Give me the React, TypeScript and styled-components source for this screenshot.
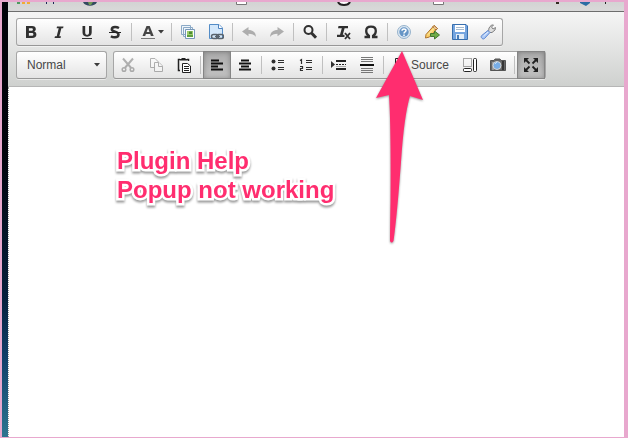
import React from "react";
import styled, { createGlobalStyle, css } from "styled-components";

const GlobalStyle = createGlobalStyle`
  * { box-sizing: border-box; }
  html, body, #root { height: 100%; margin: 0; }
  body { font-family: "Liberation Sans", Arial, sans-serif; font-size: 12px; color: #474747; }
  button, textarea { font: inherit; color: inherit; }
`;

const Frame = styled.main`
  display: flex;
  height: 100%;
  overflow: hidden;
  border-style: solid;
  border-color: #e8a8ce;
  border-width: 2px 4px 1px 2px;
`;

const Desktop = styled.div`
  flex: 0 0 6px;
  background: linear-gradient(#02030a 0%, #02040c 35%, #06203c 68%, #12406a 82%, #2e7590 100%);
`;

const Window = styled.section`
  position: relative;
  flex: 1;
  min-width: 0;
  display: flex;
  flex-direction: column;
  background: #fff;
`;

const BookmarkBar = styled.div`
  height: 10px;
  flex: none;
  overflow: hidden;
  display: grid;
  grid-template-columns: 75px 153px 101px 96px 123px 24px 25px 1fr;
  background: linear-gradient(#d3d3d3, #d9d9d9);
  border-bottom: 1px solid #6d6d6d;
`;

const Bookmark = styled.div`
  display: flex;
  align-items: flex-start;
  svg { display: block; flex: none; }
`;

const Toolbar = styled.div`
  flex: none;
  display: flex;
  flex-direction: column;
  gap: 5px;
  padding: 6px 8px 7px;
  background: linear-gradient(#f5f5f5, #cfd1cf);
  border-bottom: 1px solid #b6b6b6;
`;

const Row = styled.div`
  display: flex;
  gap: 6px;
`;

const Group = styled.div`
  display: flex;
  height: 28px;
  border: 1px solid #a6a6a6;
  border-bottom-color: #979797;
  border-radius: 3px;
  background: linear-gradient(#fff, #e4e4e4);
  box-shadow: 0 1px 0 rgba(255, 255, 255, 0.5);
`;

const ToolButton = styled.button<{ $width?: number; $active?: boolean; $dim?: boolean }>`
  display: flex;
  align-items: center;
  justify-content: center;
  gap: 2px;
  width: ${(p) => p.$width ?? 28}px;
  padding: 0;
  border: 0;
  background: transparent;
  svg { display: block; flex: none; opacity: ${(p) => (p.$dim ? 0.35 : 1)}; }
  ${(p) =>
    p.$active &&
    css`
      margin: -1px 0;
      background: linear-gradient(#aaa, #c4c4c4);
      box-shadow: inset 0 0 0 1px #858585, inset 0 0 5px 1px rgba(0, 0, 0, 0.25);
    `}
`;

const Separator = styled.span`
  width: 1px;
  height: 18px;
  margin: 4px 2px;
  background: #c0c0c0;
`;

const Combo = styled.button`
  display: flex;
  align-items: center;
  justify-content: space-between;
  width: 91px;
  height: 28px;
  padding: 0 6px 0 10px;
  border: 1px solid #a6a6a6;
  border-bottom-color: #979797;
  border-radius: 3px;
  background: linear-gradient(#fff, #e4e4e4);
  box-shadow: 0 1px 0 rgba(255, 255, 255, 0.5);
`;

const Editor = styled.textarea`
  flex: 1;
  width: 100%;
  resize: none;
  border: 0;
  border-left: 1px dotted #999;
  outline: 0;
  background: #fff;
`;

const Note = styled.p`
  position: absolute;
  left: 109px;
  top: 144px;
  margin: 0;
  font-size: 24px;
  font-weight: bold;
  line-height: 29px;
  color: #ff2d6f;
  -webkit-text-stroke: 5px #fff;
  paint-order: stroke fill;
  filter: drop-shadow(0 2px 1px rgba(0, 0, 0, 0.4));
  pointer-events: none;
`;

const Pointer = styled.svg`
  position: absolute;
  left: 364px;
  top: 48px;
  filter: drop-shadow(0 1px 1px rgba(0, 0, 0, 0.4));
  pointer-events: none;
`;

const Svg = ({ children, w = 16, h = 16 }: { children: React.ReactNode; w?: number; h?: number }) => (
  <svg width={w} height={h} viewBox={`0 0 ${w} ${h}`} fill="none" aria-hidden="true">
    {children}
  </svg>
);

const Caret = () => (
  <Svg w={6} h={4}><path d="M0 0H6L3 3.5Z" fill="#3c3c3c" /></Svg>
);

const ink = "#303030";

const icons: Record<string, React.ReactNode> = {
  bold: <path fillRule="evenodd" fill={ink} d="M3 2H9C11.600 2 12.800 3.200 12.800 5.100C12.800 6.400 12.200 7.200 11.200 7.600C12.600 8 13.400 9 13.400 10.600C13.400 12.800 12 14 9.200 14H3ZM5.900 4.200V6.800H8.300C9.400 6.800 9.900 6.300 9.900 5.500S9.400 4.200 8.300 4.200ZM5.900 9V11.800H8.600C9.800 11.800 10.400 11.300 10.400 10.400S9.800 9 8.600 9Z" />,
  italic: <path fill={ink} d="M6 2.500H12.500L12.100 4.300H10.400L8.300 12.200H10L9.500 14H3.500L4 12.200H5.700L7.700 4.300H5.600Z" />,
  underline: <g fill={ink}><path d="M3.500 2H6.200V8.500C6.200 10 6.800 10.800 8.100 10.800S10 10 10 8.500V2H12.700V8.600C12.700 11.300 11 12.700 8.100 12.700S3.500 11.300 3.500 8.600Z" /><path d="M3 14H13V15H3Z" /></g>,
  strike: <g><path d="M12 4C10.700 3.300 9.400 3 8 3C5.900 3 4.800 3.900 4.800 5.200C4.800 8.300 11.500 7 11.500 10.500C11.500 12.200 10.200 13.300 7.800 13.300C6.400 13.300 5 12.900 3.900 12.200" stroke={ink} strokeWidth="2.500" /><path d="M2 8H14V9H2Z" fill="#222" /></g>,
  imageStack: <g><path d="M1.500 1.500H10.500V10.500H1.500ZM3.500 3.500H12.500V12.500H3.500Z" fill="#eef5fb" stroke="#8ba9c6" /><path d="M5.500 5.500H14.500V14.500H5.500Z" fill="#f8fcff" stroke="#7797b8" /><path d="M7 7H13V13H7Z" fill="#9acb6a" /><path d="M9 7.500H12V10H9Z" fill="#4e8a36" /><path d="M7 11H13V13H7Z" fill="#5e9f3f" /></g>,
  docLink: <g><path d="M1.500.500H11L14.500 4V14.500H1.500Z" fill="#d3e7fa" stroke="#538cc7" /><path d="M10.500.500V4.500H14.500" fill="#fff" stroke="#4f83bf" /><rect x="3.500" y="10.500" width="7" height="4" rx="2" stroke="#59636d" strokeWidth="1.500" /><rect x="8.500" y="10.500" width="7" height="4" rx="2" stroke="#59636d" strokeWidth="1.500" /><path d="M7 12.500H12" stroke="#59636d" /></g>,
  undo: <path fill={ink} d="M1 7.500L7.500 3V6C12 6 14.500 8 15 13C13.200 10.500 11 9.700 7.500 9.700V12.300Z" />,
  redo: <path fill={ink} d="M15 7.500L8.500 3V6C4 6 1.500 8 1 13C2.800 10.500 5 9.700 8.500 9.700V12.300Z" />,
  find: <g stroke={ink}><circle cx="6.500" cy="6" r="4" strokeWidth="2" /><path d="M9.500 9L14 13.700" strokeWidth="3" /></g>,
  removeFormat: <g fill={ink}><path d="M3.500 2H13V4.200H9.600L7.800 10.800H9.500V13H2V10.800H5L6.800 4.200H3Z" /><path d="M10 9L15 15M15 9L10 15" stroke={ink} strokeWidth="1.800" /></g>,
  omega: <path d="M1.500 13H5.900V11.800C4 10.700 3.200 9 3.200 7C3.200 4.200 5 2.700 8 2.700S12.800 4.200 12.800 7C12.800 9 12 10.700 10.100 11.800V13H14.500" stroke={ink} strokeWidth="2.300" />,
  help: <g><circle cx="8" cy="8" r="6.500" fill="#dbe7f2" stroke="#97b3cc" /><circle cx="8" cy="8" r="4.700" fill="#6796c6" /><path d="M6 6.700C6 4.300 10 4.400 10 6.500C10 8 8 7.800 8 9.500M8 10.500V12" stroke="#fff" strokeWidth="1.500" /></g>,
  pencil: <g><path d="M2 10.500L10 1.500L13.500 4.500L5.500 13L1.500 14Z" fill="#f9cf69" stroke="#ad7430" /><path d="M10 1.500L13.500 4.500L12 6L8.700 3Z" fill="#edc9a5" stroke="#ad7430" /><path d="M4 10.500L10.500 4" stroke="#fff2ae" /><path d="M6.500 9.500H10.500V7L15.500 11L10.500 15V12.500H6.500Z" fill="#6eac46" stroke="#44772d" /></g>,
  save: <g><path d="M.500.500H14L15.500 2V15.500H.500Z" fill="#75a5df" stroke="#376ead" /><path d="M3 1H13V8H3Z" fill="#fff" /><path d="M4 3.500H12M4 5.500H12" stroke="#a6bbcf" /><path d="M4 10H12V15H4Z" fill="#e3edf7" /><path d="M5 11H7V15H5Z" fill="#497db7" /></g>,
  wrench: <g><path d="M8.500 7.500L9 4L11.500 1L13.500 1L11.500 3L13 5L15.500 3.500L15 6L12 8.500L9.700 8.500" fill="#dedede" stroke="#808080" /><path d="M8 6.500L10 8.500L4.500 14.500C3 16 .200 13.500 1.500 11.700Z" fill="#abc8f6" stroke="#5c86cf" /><path d="M3.500 12L8 8" stroke="#e3efff" /></g>,
  cut: <g stroke={ink}><path d="M3 1.500L11.200 11M13 1.500L4.800 11" strokeWidth="2" /><circle cx="4" cy="12.500" r="1.800" strokeWidth="1.500" /><circle cx="12" cy="12.500" r="1.800" strokeWidth="1.500" /></g>,
  copy: <g stroke={ink} fill="#fff"><path d="M2.500 1.500H7L10.500 5V10.500H2.500Z" /><path d="M6.500 5.500H11L14.500 9V14.500H6.500Z" /><path d="M10.500 5.500V9.500H14.500" /></g>,
  paste: <g><path d="M4 2.500H2.500V13.500H4M11 2.500H12.500V4" stroke="#222" strokeWidth="1.500" /><path d="M4 2H5.500V1H9.500V2H11V3.500H4Z" fill="#222" /><path d="M6.500 6.500H11.500L14.500 9V15.500H6.500Z" fill="#fff" stroke="#222" /><path d="M8 9.500H13M8 11.500H13M8 13.500H13" stroke="#222" /></g>,
  alignLeft: <path d="M2 3.500H10M2 6.500H14M2 9.500H9M2 12.500H14" stroke="#111" strokeWidth="2" />,
  alignCenter: <path d="M4 3.500H12M2 6.500H14M4 9.500H12M2 12.500H14" stroke="#111" strokeWidth="2" />,
  bullets: <g><circle cx="3.500" cy="4.500" r="2" fill={ink} /><circle cx="3.500" cy="11.500" r="2" fill={ink} /><path d="M8 3.500H14M8 5.500H14M8 10.500H14M8 12.500H14" stroke={ink} /></g>,
  numbers: <path d="M2 3.500L3.500 2.500V7M2 9.500H4.500V11.500H2.500V13.500H5M8 3.500H14M8 5.500H14M8 10.500H14M8 12.500H14" stroke={ink} strokeWidth="1.200" />,
  pageBreak: <g><path d="M0 4L4 7.500L0 11Z" fill={ink} /><path d="M5 4H15M5 12H15" stroke="#222" strokeWidth="2" /><path d="M5 7.500H15" stroke="#222" strokeDasharray="2 1" /><path d="M5 9.500H15" stroke="#aaa" /></g>,
  rule: <g><path d="M2 .500H14M2 2.500H14M2 4.500H14M2 11.500H14M2 13.500H14M2 15.500H14" stroke="#777" /><path d="M1 8H15" stroke="#111" strokeWidth="2" /></g>,
  source: <path d="M2.500 1.500H9L12.500 5V14.500H2.500Z" fill="#fff" stroke="#222" />,
  blocks: <g><path d="M1.500 1.500H9.500V9.500H1.500Z" stroke="#555" strokeDasharray="1 1" /><rect x="1.500" y="11.500" width="8" height="3" rx="1" fill="#fff" stroke="#222" /><rect x="11.500" y="1.500" width="3" height="13" rx="1" fill="#fff" stroke="#222" /></g>,
  camera: <g><path d="M.500 3.500H4L5 2H10L11 3.500H15.500V13.500H.500Z" fill="#686868" stroke="#555" /><path d="M2 5H4V13H2Z" fill="#999" /><path d="M12 4H14V13H12Z" fill="#353535" /><circle cx="7" cy="8.500" r="4" fill="#78ade6" stroke="#d5d5d5" /><path d="M5 7L7 5" stroke="#c6e1fb" /></g>,
  maximize: <g stroke="#222" strokeWidth="1.800"><path d="M3 3L6.500 6.500M13 3L9.500 6.500M3 13L6.500 9.500M13 13L9.500 9.500" /><path d="M1 1H6L1 6ZM15 1H10L15 6ZM1 15H6L1 10ZM15 15H10L15 10Z" fill="#222" stroke="none" /></g>,
};

const Tool = ({ icon, label, active, dim }: { icon: string; label: string; active?: boolean; dim?: boolean }) => (
  <ToolButton type="button" aria-label={label} aria-pressed={active} $active={active} $dim={dim}>
    <Svg>{icons[icon]}</Svg>
  </ToolButton>
);

const PageEdge = () => (
  <Svg w={11} h={3}><path d="M.5 0V2.500H10.500V0" fill="#fff" stroke="#777" /></Svg>
);

export default function App() {
  return (
    <>
      <GlobalStyle />
      <Frame>
        <Desktop />
        <Window>
          <BookmarkBar>
            <Bookmark>
              <Svg w={50} h={3}>
                <path d="M9 0H12V2H9Z" fill="#4d9b60" />
                <path d="M14 0H17V2H14ZM19 0H22V2H19Z" fill="#f2ab35" />
                <path d="M38 0H39V2H38ZM45 0H46V2H45Z" fill="#1c2458" />
              </Svg>
            </Bookmark>
            <Bookmark><Svg w={14} h={4}><path d="M0 0H14C12 5 2 5 0 0Z" fill="#334a60" /><path d="M5 0H10L8 3H6Z" fill="#6f9a55" /></Svg></Bookmark>
            <Bookmark><PageEdge /></Bookmark>
            <Bookmark><Svg w={14} h={4}><path d="M1 0C3 4 11 4 13 0" fill="#fff" stroke="#222" strokeWidth="2" /></Svg></Bookmark>
            <Bookmark><PageEdge /></Bookmark>
            <Bookmark><Svg w={3} h={2}><path d="M0 1H2V0H3" stroke="#332b22" strokeWidth="2" /></Svg></Bookmark>
            <Bookmark><Svg w={11} h={4}><path d="M0 0H10V1L6 4L0 1Z" fill="#2b6ca3" /></Svg></Bookmark>
            <Bookmark><Svg w={2} h={2}><path d="M0 0H1V2H0Z" fill="#222" /></Svg></Bookmark>
          </BookmarkBar>
          <Toolbar>
            <Row>
              <Group role="group">
                <Tool icon="bold" label="Bold" />
                <Tool icon="italic" label="Italic" />
                <Tool icon="underline" label="Underline" />
                <Tool icon="strike" label="Strikethrough" />
                <Separator />
                <ToolButton type="button" aria-label="Text Color" $width={35}>
                  <Svg><path fillRule="evenodd" fill="#444" d="M2.500 12L6.500 2H9.700L13.700 12H10.900L10.200 10H5.900L5.200 12ZM6.600 8H9.500L8.100 4.200Z" /><path d="M1 14H15V15H1Z" fill="#777" /></Svg>
                  <Caret />
                </ToolButton>
                <Separator />
                <Tool icon="imageStack" label="Image" />
                <Tool icon="docLink" label="Document Link" />
                <Separator />
                <Tool icon="undo" label="Undo" dim />
                <Tool icon="redo" label="Redo" dim />
                <Separator />
                <Tool icon="find" label="Find" />
                <Separator />
                <Tool icon="removeFormat" label="Remove Format" />
                <Tool icon="omega" label="Special Character" />
                <Separator />
                <Tool icon="help" label="Help" />
                <Tool icon="pencil" label="Edit" />
                <Tool icon="save" label="Save" />
                <Tool icon="wrench" label="Settings" />
              </Group>
            </Row>
            <Row>
              <Combo type="button" aria-haspopup="listbox">Normal<Caret /></Combo>
              <Group role="group">
                <Tool icon="cut" label="Cut" dim />
                <Tool icon="copy" label="Copy" dim />
                <Tool icon="paste" label="Paste" />
                <Separator />
                <Tool icon="alignLeft" label="Align Left" active />
                <Tool icon="alignCenter" label="Center" />
                <Separator />
                <Tool icon="bullets" label="Bulleted List" />
                <Tool icon="numbers" label="Numbered List" />
                <Separator />
                <Tool icon="pageBreak" label="Page Break" />
                <Tool icon="rule" label="Horizontal Line" />
                <Separator />
                <ToolButton type="button" $width={70}>
                  <Svg>{icons.source}</Svg>
                  Source
                </ToolButton>
                <Tool icon="blocks" label="Show Blocks" />
                <Tool icon="camera" label="Media" />
                <Separator />
                <Tool icon="maximize" label="Maximize" active />
              </Group>
            </Row>
          </Toolbar>
          <Editor aria-label="Editor content" />
          <Note>Plugin Help<br />Popup not working</Note>
          <Pointer width="56" height="196" viewBox="0 0 56 196" aria-hidden="true">
            <path d="M30 1L51 50L38 46Q32 66 29 112Q25 166 21.500 191Q19.500 194 18 191Q18 180 18.500 151Q19 75 17 45L4 48Z" fill="#ff2d6f" />
          </Pointer>
        </Window>
      </Frame>
    </>
  );
}
